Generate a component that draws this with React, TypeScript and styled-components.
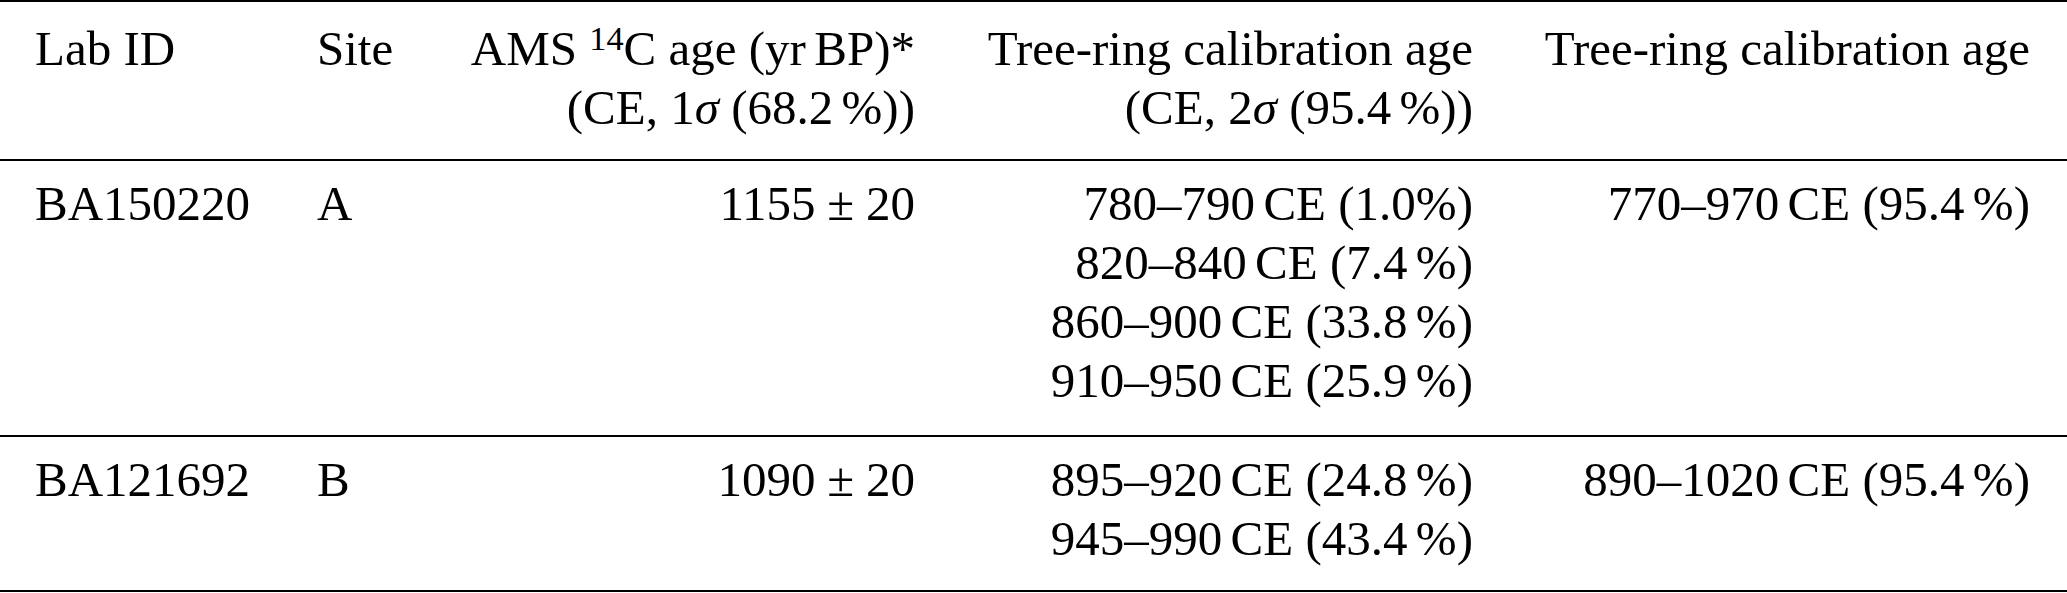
import styled, { createGlobalStyle } from "styled-components";

const GlobalStyle = createGlobalStyle`
  html, body {
    margin: 0;
    padding: 0;
    background: #fff;
  }
  body {
    font-family: "Liberation Serif", "Times New Roman", serif;
    color: #000;
  }
`;

const Table = styled.table`
  width: 2067px;
  table-layout: fixed;
  border-collapse: separate;
  border-spacing: 0;
  font-size: 49px;
  line-height: 59px;
`;

const HeadCell = styled.th<{ $align?: "left" | "right" }>`
  padding: 17px 34px 22px;
  border-top: 2px solid #000;
  border-bottom: 2px solid #000;
  font-weight: normal;
  vertical-align: top;
  white-space: nowrap;
  text-align: ${(p) => p.$align ?? "left"};
  &:first-child {
    padding-left: 35px;
  }
  &:last-child {
    padding-right: 37px;
  }
`;

const Row = styled.tr`
  &:last-child td {
    padding-bottom: 22px;
  }
`;

const Cell = styled.td<{ $align?: "left" | "right" }>`
  padding: 13px 34px 25px;
  border-bottom: 2px solid #000;
  vertical-align: top;
  white-space: nowrap;
  text-align: ${(p) => p.$align ?? "left"};
  &:first-child {
    padding-left: 35px;
  }
  &:last-child {
    padding-right: 37px;
  }
`;

const Line = styled.div`
  display: block;
`;

const Gap = styled.span<{ $w: number }>`
  display: inline-block;
  width: ${(p) => p.$w}em;
`;

const Sup = styled.sup`
  font-size: 0.7em;
  line-height: 0;
  vertical-align: 0.45em;
`;

const Sigma = styled.i`
  font-style: italic;
`;

type Range = { span: string; pct: string; tight?: boolean };

const rows: {
  id: string;
  site: string;
  age: number;
  err: number;
  ranges: Range[];
  total: string;
}[] = [
  {
    id: "BA150220",
    site: "A",
    age: 1155,
    err: 20,
    ranges: [
      { span: "780–790", pct: "1.0", tight: true },
      { span: "820–840", pct: "7.4" },
      { span: "860–900", pct: "33.8" },
      { span: "910–950", pct: "25.9" },
    ],
    total: "770–970",
  },
  {
    id: "BA121692",
    site: "B",
    age: 1090,
    err: 20,
    ranges: [
      { span: "895–920", pct: "24.8" },
      { span: "945–990", pct: "43.4" },
    ],
    total: "890–1020",
  },
];

function Span({ span, pct, tight }: Range) {
  return (
    <>
      {span}
      <Gap $w={0.17} />
      CE ({pct}
      {!tight && <Gap $w={0.17} />}%)
    </>
  );
}

export default function App() {
  return (
    <>
      <GlobalStyle />
      <Table>
        <colgroup>
          <col style={{ width: 283 }} />
          <col style={{ width: 144 }} />
          <col style={{ width: 522 }} />
          <col style={{ width: 558 }} />
          <col style={{ width: 560 }} />
        </colgroup>
        <thead>
          <tr>
            <HeadCell>Lab ID</HeadCell>
            <HeadCell>Site</HeadCell>
            <HeadCell $align="right">
              <Line>
                AMS <Sup>14</Sup>C age (yr
                <Gap $w={0.17} />
                BP)*
              </Line>
              <Line>
                (CE, 1<Sigma>σ</Sigma> (68.2
                <Gap $w={0.17} />
                %))
              </Line>
            </HeadCell>
            <HeadCell $align="right">
              <Line>Tree-ring calibration age</Line>
              <Line>
                (CE, 2<Sigma>σ</Sigma> (95.4
                <Gap $w={0.17} />
                %))
              </Line>
            </HeadCell>
            <HeadCell $align="right">Tree-ring calibration age</HeadCell>
          </tr>
        </thead>
        <tbody>
          {rows.map((r) => (
            <Row key={r.id}>
              <Cell>{r.id}</Cell>
              <Cell>{r.site}</Cell>
              <Cell $align="right">
                {r.age}
                <Gap $w={0.24} />±<Gap $w={0.24} />
                {r.err}
              </Cell>
              <Cell $align="right">
                {r.ranges.map((g) => (
                  <Line key={g.span}>
                    <Span {...g} />
                  </Line>
                ))}
              </Cell>
              <Cell $align="right">
                <Span span={r.total} pct="95.4" />
              </Cell>
            </Row>
          ))}
        </tbody>
      </Table>
    </>
  );
}
